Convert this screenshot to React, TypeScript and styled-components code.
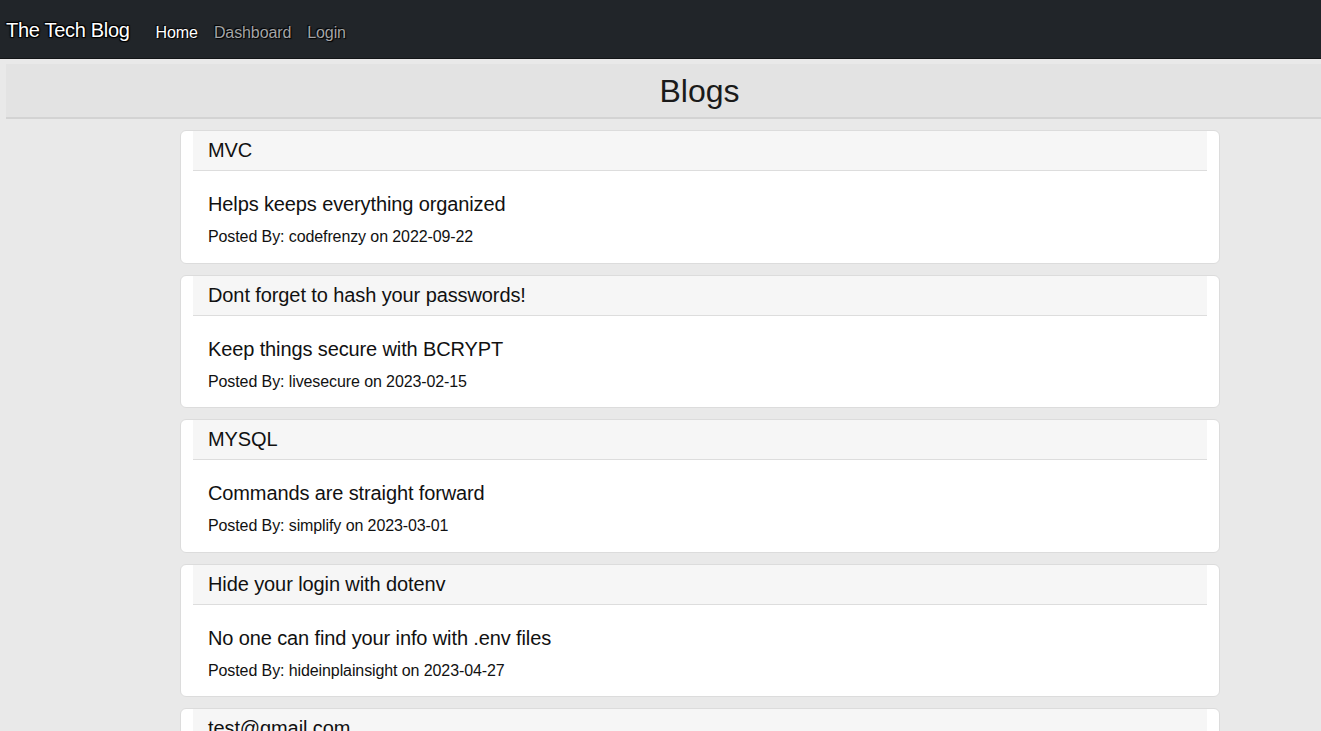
import React from "react";
import styled, { createGlobalStyle } from "styled-components";

const GlobalStyle = createGlobalStyle`
  html, body {
    margin: 0;
    padding: 0;
    background: #e9e9e9;
    font-family: "Liberation Sans", Arial, Helvetica, sans-serif;
    overflow: hidden;
  }
`;

const Page = styled.div`
  width: 1399px;
  min-height: 731px;
  background: #e9e9e9;
`;

const NavBar = styled.nav`
  height: 58px;
  background: #212529;
  border-bottom: 1px solid #131517;
  display: flex;
  align-items: center;
  padding: 0 6px;
  box-sizing: content-box;
`;

const Brand = styled.a`
  font-size: 20px;
  color: #ffffff;
  text-decoration: none;
  text-shadow: 1px 1px 1px #000, -1px -1px 1px #000, 1px -1px 1px #000, -1px 1px 1px #000;
  margin-right: 18px;
  margin-top: 2px;
  letter-spacing: -0.3px;
`;

const NavLinks = styled.div`
  display: flex;
  align-items: center;
  margin-top: 8px;
`;

const NavLink = styled.a<{ $active?: boolean }>`
  font-size: 16px;
  padding: 0 8px;
  color: ${(p) => (p.$active ? "#ffffff" : "#a3a4a6")};
  text-decoration: none;
  letter-spacing: -0.1px;
  text-shadow: 1px 1px 1px #000, -1px -1px 1px #000;
`;

const Main = styled.main`
  padding: 5px 0 0 6px;
`;

const Header = styled.header`
  height: 53px;
  background: #e3e3e3;
  border-bottom: 2px solid #d3d3d3;
  display: flex;
  align-items: center;
  justify-content: center;
  padding-right: 6px;
`;

const Title = styled.h1`
  margin: 2px 0 0 0;
  font-size: 32px;
  font-weight: 400;
  color: #1a1a1a;
`;

const List = styled.section`
  width: 1040px;
  margin: 11px 0 0 174px;
  display: flex;
  flex-direction: column;
  gap: 11px;
`;

const Card = styled.article`
  background: #ffffff;
  border: 1px solid #dcdcdc;
  border-radius: 6px;
  padding: 0 12px;
`;

const CardHeader = styled.div`
  background: #f6f6f6;
  border-bottom: 1px solid #dddddd;
  padding: 8px 15px;
  font-size: 20px;
  line-height: 23px;
  color: #111;
  letter-spacing: -0.1px;
`;

const CardBody = styled.div`
  padding: 21px 15px 15.5px;
`;

const Summary = styled.p`
  margin: 0 0 11px;
  font-size: 20px;
  line-height: 24px;
  color: #111;
  letter-spacing: -0.12px;
`;

const Meta = styled.p`
  margin: 0;
  font-size: 16px;
  line-height: 20px;
  color: #111;
  letter-spacing: -0.1px;
`;

const posts = [
  { title: "MVC", body: "Helps keeps everything organized", user: "codefrenzy", date: "2022-09-22" },
  { title: "Dont forget to hash your passwords!", body: "Keep things secure with BCRYPT", user: "livesecure", date: "2023-02-15" },
  { title: "MYSQL", body: "Commands are straight forward", user: "simplify", date: "2023-03-01" },
  { title: "Hide your login with dotenv", body: "No one can find your info with .env files", user: "hideinplainsight", date: "2023-04-27" },
  { title: "test@gmail.com", body: "test", user: "test", date: "2023-05-01" },
];

export default function App() {
  return (
    <Page>
      <GlobalStyle />
      <NavBar>
        <Brand href="#">The Tech Blog</Brand>
        <NavLinks>
          <NavLink href="#" $active>Home</NavLink>
          <NavLink href="#">Dashboard</NavLink>
          <NavLink href="#">Login</NavLink>
        </NavLinks>
      </NavBar>
      <Main>
        <Header>
          <Title>Blogs</Title>
        </Header>
        <List>
          {posts.map((p) => (
            <Card key={p.title}>
              <CardHeader>{p.title}</CardHeader>
              <CardBody>
                <Summary>{p.body}</Summary>
                <Meta>
                  Posted By: {p.user} on {p.date}
                </Meta>
              </CardBody>
            </Card>
          ))}
        </List>
      </Main>
    </Page>
  );
}
